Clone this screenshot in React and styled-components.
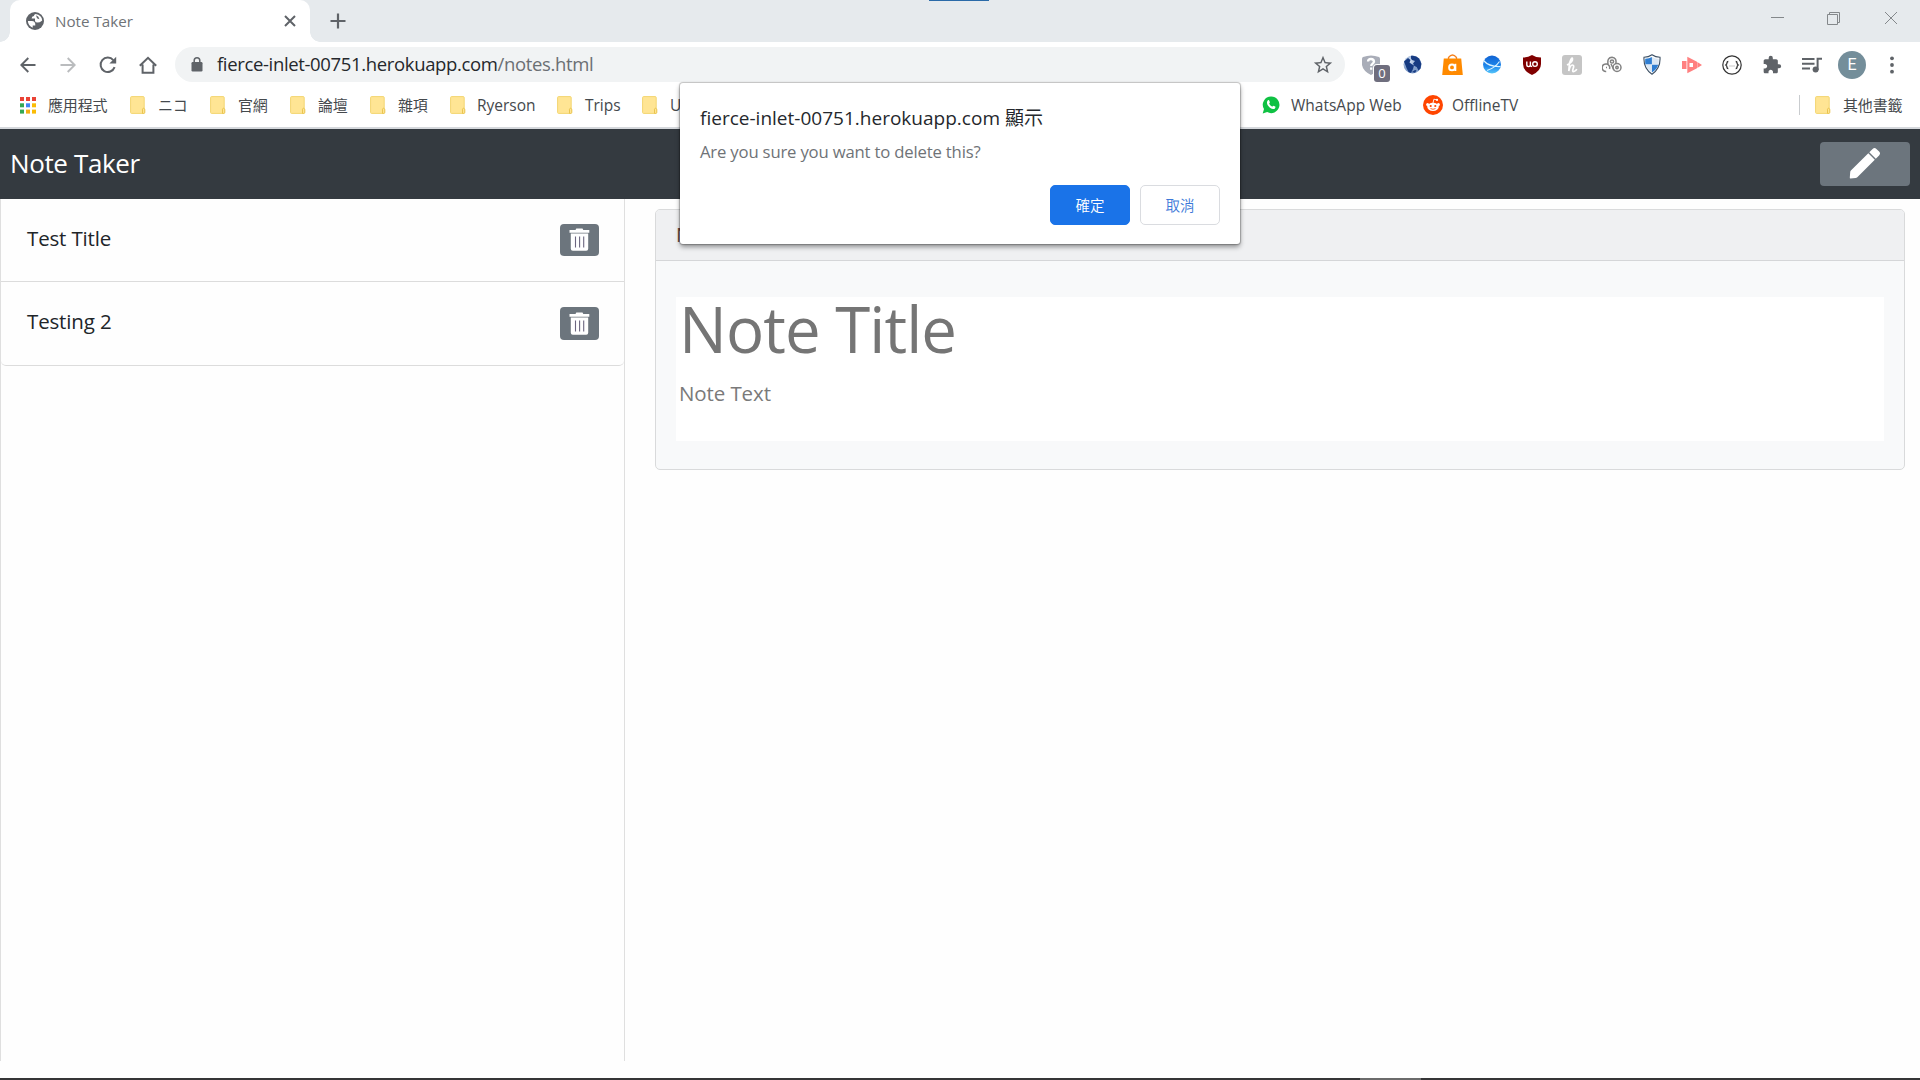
import React from "react";
import styled, { createGlobalStyle } from "styled-components";

const Global = createGlobalStyle`
  * { box-sizing: border-box; }
  html, body { margin: 0; padding: 0; height: 100%; background: #fff; overflow: hidden; }
  body { font-family: "Open Sans", "Noto Sans CJK TC", sans-serif; color: #212529; }
`;

const Screen = styled.div`
  width: 1920px; height: 1080px; display: flex; flex-direction: column;
  background: #fefefe; position: relative; overflow: hidden;
`;

const Label = styled.span`
  display: block; white-space: nowrap;
  font-size: ${(p) => p.$size}px; line-height: ${(p) => p.$line || Math.round(p.$size * 1.4)}px;
  letter-spacing: ${(p) => p.$track || 0}px; color: ${(p) => p.$color || "#212529"};
  font-weight: ${(p) => p.$weight || 400};
`;

/* ---------- tab strip ---------- */
const TabStrip = styled.header`
  height: 42px; flex: none; display: flex; background: #e6eaed; position: relative; padding-left: 10px;
`;
const Tab = styled.div`
  width: 300px; height: 42px; background: #fff; border-radius: 10px 10px 0 0; position: relative;
  display: flex; align-items: center; padding: 0 14px 0 16px;
  &::before, &::after {
    content: ""; position: absolute; bottom: 0; width: 10px; height: 10px;
  }
  &::before { left: -10px; background: radial-gradient(circle at 0 0, transparent 9.5px, #fff 10px); }
  &::after { right: -10px; background: radial-gradient(circle at 100% 0, transparent 9.5px, #fff 10px); }
`;
const TabTitle = styled(Label)`flex: 1; margin-left: 11px;`;
const NewTab = styled.div`
  width: 55px; height: 42px; display: flex; align-items: center; justify-content: center;
`;
const WindowControls = styled.div`
  margin-left: auto; display: flex; height: 36px; padding-right: 1px;
`;
const WindowButton = styled.div`
  width: 57px; display: flex; align-items: center; justify-content: center;
`;
const DragMark = styled.div`
  position: absolute; left: 929px; top: 0; width: 60px; height: 1px; background: #2a6aa8;
`;

/* ---------- toolbar ---------- */
const Toolbar = styled.div`
  height: 45px; flex: none; display: flex; align-items: center; background: #fff; padding-left: 8px;
`;
const IconSlot = styled.div`
  width: 40px; height: 40px; flex: none; display: flex; align-items: center; justify-content: center; position: relative;
  svg { display: block; }
`;
const Omnibox = styled.div`
  margin-left: 7px; width: 1170px; flex: none; height: 35px; border-radius: 18px; background: #f1f3f4;
  display: flex; align-items: center; padding: 0 11px 0 16px;
`;
const Url = styled(Label)`flex: 1; margin: 0 0 2px 14px; em { font-style: normal; color: #6b6f73; }`;
const Extensions = styled.div`display: flex; margin-left: 7px;`;
const Badge = styled.span`
  position: absolute; left: 22px; top: 20px; width: 16px; height: 17px; border-radius: 3px; background: #6f6e7e;
  color: #fff; font-size: 13px; line-height: 17px; text-align: center; box-shadow: 0 0 0 1px #fff;
`;
const Avatar = styled.div`
  width: 28px; height: 28px; border-radius: 50%; background: #748e9a; color: #fff;
  font: 16px/28px Roboto, sans-serif; text-align: center;
`;

/* ---------- bookmarks ---------- */
const Bookmarks = styled.nav`
  height: 40px; flex: none; display: flex; align-items: center; background: #fff; padding: 0 8px 4px 20px;
`;
const Bookmark = styled.div`
  width: ${(p) => p.$w}px; flex: none; display: flex; align-items: center; gap: ${(p) => p.$gap || 13}px;
`;
const Divider = styled.div`width: 1px; height: 20px; background: #c9cccf; margin: 0 15px 0 auto;`;
const Edge = styled.div`height: 2px; flex: none; background: #d5d8dc;`;

/* ---------- page ---------- */
const Navbar = styled.div`
  height: 70px; flex: none; background: #343a40; display: flex; align-items: center; justify-content: space-between;
  padding: 0 10px;
`;
const Brand = styled(Label)`margin-bottom: 2px;`;
const PencilButton = styled.button`
  width: 90px; height: 44px; border: 0; border-radius: 4px; background: #6c757d; padding: 0 0 2px;
  display: flex; align-items: center; justify-content: center;
`;
const Page = styled.main`flex: 1; display: flex; align-items: flex-start;`;
const Sidebar = styled.aside`
  width: 625px; height: 862px; border: solid #dfdfdf; border-width: 0 1px; flex: none;
`;
const ListItem = styled.div`
  height: ${(p) => p.$h}px; border-bottom: 1px solid #dcdcdc; display: flex; justify-content: space-between;
  padding: 25px 25px 0 26px; border-radius: ${(p) => (p.$last ? "0 0 5px 5px" : 0)};
`;
const TrashButton = styled.button`
  width: 39px; height: ${(p) => p.$h}px; border: 0; border-radius: 4px; background: #6c757d; padding: 0 0 1px;
  display: flex; align-items: center; justify-content: center;
`;
const Card = styled.section`
  margin: 10px 0 0 30px; width: 1250px; height: 261px; border: 1px solid #d9dadb; border-radius: 5px; background: #f8f9fa;
  overflow: hidden; display: flex; flex-direction: column;
`;
const CardHead = styled.div`
  height: 51px; flex: none; background: #eff0f2; border-bottom: 1px solid #d5d6d8; padding: 10px 20px;
`;
const NoteForm = styled.div`
  margin: 36px 20px 0; height: 144px; background: #fff; padding: 0 3px; display: flex; flex-direction: column;
`;
const NoteTitle = styled(Label)`margin: -10px 0 7px;`;

/* ---------- dialog ---------- */
const Dialog = styled.div`
  position: absolute; left: 680px; top: 83px; width: 560px; height: 161px; background: #fff; border-radius: 3px;
  box-shadow: 0 0 1px 1px rgba(0,0,0,.22), 0 3px 5px rgba(0,0,0,.4); padding: 20px 20px 19px;
  display: flex; flex-direction: column; gap: 7px;
`;
const DialogActions = styled.div`display: flex; justify-content: flex-end; gap: 10px; margin-top: auto;`;
const DialogButton = styled.button`
  width: 80px; height: 40px; border-radius: 5px; padding: 0 0 2px;
  background: ${(p) => (p.$primary ? "#1a73e8" : "#fff")}; color: ${(p) => (p.$primary ? "#fff" : "#3c78d8")};
  border: 1px solid ${(p) => (p.$primary ? "#1a73e8" : "#dadce0")};
  font: 350 14.5px "Noto Sans CJK TC", sans-serif;
`;

const Taskbar = styled.footer`
  height: 2px; flex: none; background: #353537; display: flex; padding-left: 1360px;
`;
const TaskMark = styled.div`width: 61px; background: #6b6b6b;`;

/* ---------- icons ---------- */
const G = "#5f6368";
const Globe = () => (
  <svg width="18" height="18" viewBox="0 0 18 18">
    <circle cx="9" cy="9" r="9" fill={G} />
    <path d="M9.600 2.100Q8 2.600 7.900 4.100 5.600 4.200 5.600 6.600H9v2.300q.2 1.500 2.600 1.600 2.300 0 3.600-1.300l1-.6Q15.900 3.200 9.600 2.100z" fill="#fff" />
    <path d="M1.900 9.100h3.900q3.900.2 3.500 4.300H6.700v2.300Q2 14 1.900 9.100z" fill="#fff" />
    <path d="M10 3.200Q13 4.200 13.400 7.200L11 6.200z" fill={G} />
  </svg>
);
const Cross = ({ size, color, width }) => (
  <svg width={size} height={size} viewBox={`0 0 ${size} ${size}`}>
    <path d={`M1 1L${size - 1} ${size - 1}M${size - 1} 1L1 ${size - 1}`} stroke={color} strokeWidth={width} />
  </svg>
);
const Arrow = ({ flip, color }) => (
  <svg width="16" height="16" viewBox="0 0 16 16" transform={flip ? "scale(-1 1)" : undefined}>
    <path d="M15.500 8H1.500M8.300 1L1.300 8l7 7" fill="none" stroke={color} strokeWidth="1.900" />
  </svg>
);
const Reload = () => (
  <svg width="18" height="18" viewBox="0 0 18 18">
    <path d="M15.600 11.200A7.200 7.200 0 1 1 14.300 4.100" fill="none" stroke={G} strokeWidth="2" />
    <path d="M17.200.8V7.600H10.400z" fill={G} />
  </svg>
);
const Home = () => (
  <svg width="18" height="18" viewBox="0 0 18 18">
    <path d="M.8 9.800L9 1.800l8.200 8M3.600 8.500v8.300h10.800V8.500" fill="none" stroke={G} strokeWidth="2" />
  </svg>
);
const Lock = () => (
  <svg width="12" height="15" viewBox="0 0 12 15">
    <rect x=".5" y="5" width="11" height="9.500" rx="1.200" fill={G} />
    <path d="M3.200 6V3.600a2.800 2.800 0 0 1 5.600 0V6" fill="none" stroke={G} strokeWidth="1.500" />
  </svg>
);
const Star = () => (
  <svg width="22" height="22" viewBox="0 0 24 24">
    <path fill={G} d="M22 9.240l-7.190-.62L12 2 9.190 8.630 2 9.240l5.460 4.730L5.820 21 12 17.270 18.180 21l-1.630-7.030L22 9.240zM12 15.400l-3.760 2.270 1-4.280-3.320-2.880 4.380-.38L12 6.100l1.710 4.040 4.380.38-3.320 2.880 1 4.280L12 15.400z" />
  </svg>
);
const Apps = () => (
  <svg width="16" height="17" viewBox="0 0 16 17">
    {["#ea4335", "#ea4335", "#ea4335", "#34a853", "#4285f4", "#fbbc05", "#34a853", "#f4ae13", "#fbbc05"].map((c, i) => (
      <rect key={i} x={(i % 3) * 6} y={Math.floor(i / 3) * 6.300} width="4" height="4" fill={c} />
    ))}
  </svg>
);
const Folder = () => (
  <svg width="16" height="18" viewBox="0 0 16 18">
    <rect x=".6" y=".6" width="13.600" height="16.800" rx="1" fill="#ffe594" stroke="#f3d671" />
    <path d="M12.500 17.400v-4.200q1-2.400 2.300 0v3.200q0 1-1 1z" fill="#ffe594" stroke="#e9c44f" />
  </svg>
);
const Whatsapp = () => (
  <svg width="18" height="18" viewBox="0 0 18 18">
    <path d="M9.200.5a8.300 8.300 0 1 1-4 15.600L.7 17.400 2 13.100A8.300 8.300 0 0 1 9.200.5z" fill="#0fc143" />
    <path d="M5.700 4.500c.8-.8 1.300-.5 1.600.3l.6 1.400c.2.500-.7 1.200-.7 1.400.5 1.400 1.600 2.500 3 3 .4 0 .9-1.100 1.300-.9l1.700.8c.6.3.2 1.700-.5 2.200-1.300.9-3.300.3-5.300-1.400C5.100 9.200 4.200 6.300 5.700 4.500z" fill="#fff" />
  </svg>
);
const Reddit = () => (
  <svg width="20" height="20" viewBox="0 0 20 20">
    <circle cx="10" cy="10" r="10" fill="#ff4500" />
    <path d="M10 8l.9-3.800 2.700.6" fill="none" stroke="#fff" strokeWidth=".9" />
    <circle cx="14" cy="4.900" r="1.100" fill="#fff" />
    <circle cx="4.600" cy="9.600" r="1.500" fill="#fff" /><circle cx="15.400" cy="9.600" r="1.500" fill="#fff" />
    <ellipse cx="10" cy="11.800" rx="5.800" ry="4.100" fill="#fff" />
    <circle cx="7.700" cy="11" r="1.100" fill="#ff4500" /><circle cx="12.300" cy="11" r="1.100" fill="#ff4500" />
    <path d="M7.500 13.500q2.500 1.600 5 0" fill="none" stroke="#ff4500" strokeWidth=".8" />
  </svg>
);
const QuestionShield = () => (
  <svg width="20" height="20" viewBox="0 0 20 20">
    <path d="M1 2Q9-1 17 2q1 .3 1 2v6q-1 6-9 10Q1 16 0 10V4Q0 2.300 1 2z" fill="#a9adb8" />
    <path d="M6 6.500Q6.200 4 9 4t3 2.600c0 2-2.800 2-2.800 4.400M9.200 12.600v2.200" fill="none" stroke="#fff" strokeWidth="2.300" />
  </svg>
);
const EarthGlobe = () => (
  <svg width="19" height="19" viewBox="0 0 19 19">
    <defs><radialGradient id="earth" cx=".35" cy=".3"><stop offset="0" stopColor="#d3e0f2" /><stop offset="1" stopColor="#7f9cc8" /></radialGradient></defs>
    <circle cx="9.500" cy="9.500" r="9" fill="url(#earth)" />
    <path d="M8 .8q5-.8 8 2.700l2.300 5-.8 5-2 2-1.800-3.500-2.300-1-1.400-2.500L12 6 9 5 8 3.500zM1 6.500l4-3.500 2.500 2-1 2.500 2 1.500 2.500 1.500-1 3.500-2 4-2.500-1-2-4zM9 17l3-2 1.500.5-1.500 2.300z" fill="#173b82" />
  </svg>
);
const Bag = () => (
  <svg width="21" height="22" viewBox="0 0 21 22">
    <path d="M6.500 6V3.500q4-5 8 0V6" fill="none" stroke="#f58220" strokeWidth="1.300" />
    <path d="M1.800 4.500h17.400L20.800 21H.2z" fill="#ff8a00" />
    <circle cx="10" cy="13.400" r="2.900" fill="none" stroke="#fff" strokeWidth="1.900" />
    <path d="M13.400 9.800v7.200" stroke="#fff" strokeWidth="1.800" />
  </svg>
);
const BlueGlobe = () => (
  <svg width="20" height="19" viewBox="0 0 20 19">
    <defs><linearGradient id="ocean" x2="0" y2="1"><stop offset="0" stopColor="#1263d2" /><stop offset=".6" stopColor="#1d87ec" /><stop offset="1" stopColor="#58c6fa" /></linearGradient></defs>
    <circle cx="10" cy="9.500" r="9" fill="url(#ocean)" />
    <path d="M1.500 5.500Q7 12 18.500 11.500M17.500 6.500Q13 13 5 15.500" fill="none" stroke="#d9f2ff" strokeWidth="1.200" />
  </svg>
);
const Ublock = () => (
  <svg width="18" height="20" viewBox="0 0 18 20">
    <path d="M9 0q4 2.500 9 2.500V9q0 7-9 11Q0 16 0 9V2.500Q5 2.500 9 0z" fill="#800000" />
    <path d="M3.800 6.500v3.300q0 1.800 1.800 1.800t1.800-1.800V6.500v3.600q.3 1.500 1.700 1.500" fill="none" stroke="#fff" strokeWidth="1.400" />
    <circle cx="12" cy="9.100" r="2.300" fill="none" stroke="#fff" strokeWidth="1.400" />
  </svg>
);
const Honey = () => (
  <svg width="20" height="20" viewBox="0 0 20 20">
    <rect width="20" height="20" rx="3" fill="#c5c5c5" />
    <path d="M5 10Q11 7 10.500 4T7.500 8L6.800 16q1.500-6 3.600-6t.8 3.500.8 3 2.700-2.500" fill="none" stroke="#fff" strokeWidth="1.700" />
  </svg>
);
const Rings = () => (
  <svg width="20" height="17" viewBox="0 0 20 17">
    <g fill="none" stroke="#828282" strokeWidth="1.500">
      <path d="M4.200 15.500A3.800 3.800 0 1 1 7.500 13M6 8Q5 1.500 10 1.300q5 .4 3.800 6.400" />
      <circle cx="15" cy="11.500" r="4" /><circle cx="10" cy="5.500" r="1.600" /><circle cx="15" cy="11.500" r="1.200" />
      <path d="M4 11.500h1M9 8l3 6" />
    </g>
  </svg>
);
const CheckedShield = () => (
  <svg width="18" height="21" viewBox="0 0 18 21">
    <path d="M9 .8q3.500 2.400 8 2.400 .8 11-8 17Q.2 14.200 1 3.200 5.500 3.200 9 .8z" fill="#fff" stroke="#3c4f63" strokeWidth="1.100" />
    <path d="M8.900 3v7.600H2.400Q2 8 2.200 4.700 6 4.800 8.900 3zM9 10.600h6.300Q14 15.500 9 18.600z" fill="#2e7dd1" />
    <path d="M9 3q3 1.800 6.800 1.700.2 3-.4 5.900H9zM2.600 10.600H9v8Q4 15.500 2.600 10.600z" fill="#dbe7f3" />
  </svg>
);
const PinkPlay = () => (
  <svg width="20" height="18" viewBox="0 0 20 18">
    <path d="M0 5h4.500v8H0zM5.300.8L15 5.800v6.400L5.300 17.200zM15.300 6L20 9l-4.700 3z" fill="#ff8080" />
    <path d="M7.500 7H11v4H7.500z" fill="#fff" />
  </svg>
);
const Braces = () => (
  <svg width="20" height="20" viewBox="0 0 20 20">
    <circle cx="10" cy="10" r="9.200" fill="none" stroke="#333" strokeWidth="1.200" />
    <path d="M6.300 6.500q-1.300 0-1.300 1.300t-1.200 2.200q1.200.8 1.200 2.200t1.300 1.300M13.700 6.500q1.300 0 1.300 1.300t1.200 2.200q-1.200.8-1.200 2.200t-1.300 1.300" fill="none" stroke="#333" strokeWidth="1.300" />
    <path d="M7.500 11h1M9.500 11h1M11.500 11h1" stroke="#777" strokeWidth=".8" />
  </svg>
);
const Puzzle = () => (
  <svg width="20" height="20" viewBox="0 0 24 24">
    <path fill={G} d="M20.500 11H19V7c0-1.100-.9-2-2-2h-4V3.500a2.500 2.500 0 0 0-5 0V5H4c-1.100 0-1.990.9-1.990 2v3.800H3.500c1.490 0 2.700 1.210 2.700 2.700s-1.210 2.700-2.700 2.700H2V20c0 1.100.9 2 2 2h3.800v-1.500c0-1.490 1.210-2.700 2.700-2.700 1.490 0 2.700 1.210 2.700 2.700V22H17c1.100 0 2-.9 2-2v-4h1.500a2.500 2.500 0 0 0 0-5z" />
  </svg>
);
const Music = () => (
  <svg width="20" height="16" viewBox="0 0 20 16">
    <path d="M0 2h12.500M0 6.800h12.500M0 11.600h8M15.600 13V1.800H20" fill="none" stroke={G} strokeWidth="2" />
    <circle cx="13.600" cy="12.600" r="3" fill={G} />
  </svg>
);
const Dots = () => (
  <svg width="4" height="18" viewBox="0 0 4 18">
    {[2.300, 9, 15.700].map((y) => <circle key={y} cx="2" cy={y} r="1.900" fill={G} />)}
  </svg>
);
const Trash = () => (
  <svg width="21" height="23" viewBox="0 0 21 23">
    <path d="M.5 2h6l.8-1.500h6.200l.8 1.500h6v2.700H.5zM1.800 5.600h17.400v15.200q0 2-2 2H3.800q-2 0-2-2z" fill="#fff" />
    <path d="M6.500 8.500v11M10.600 8.500v11M14.700 8.500v11" stroke="#6c6680" strokeWidth="1.100" />
  </svg>
);
const Pencil = () => (
  <svg width="32" height="32" viewBox="0 0 32 32">
    <path d="M19.300 6.200L25.800 12.700 8.300 30.200Q7.600 31 6.600 31L1.500 31.500Q.6 31.500.8 30.600L1.200 25.200Q1.200 24.300 1.900 23.600zM20.300 5.200L23.600 1.900Q25.500 0 27.400 1.900L30.100 4.600Q32 6.500 30.100 8.400L26.800 11.700z" fill="#fff" />
  </svg>
);

const extensionIcons = [EarthGlobe, Bag, BlueGlobe, Ublock, Honey, Rings, CheckedShield, PinkPlay, Braces, Puzzle, Music];

const bookmarks = [
  { icon: Apps, text: "應用程式", w: 110, gap: 12 },
  { icon: Folder, text: "ニコ", w: 80, gap: 12 },
  { icon: Folder, text: "官網", w: 80, gap: 12 },
  { icon: Folder, text: "論壇", w: 80, gap: 12 },
  { icon: Folder, text: "雜項", w: 80, gap: 12 },
  { icon: Folder, text: "Ryerson", w: 107, gap: 11, latin: true },
  { icon: Folder, text: "Trips", w: 85, gap: 12, latin: true },
  { icon: Folder, text: "U", w: 620, gap: 12, latin: true },
  { icon: Whatsapp, text: "WhatsApp Web", w: 161, gap: 11, latin: true },
  { icon: Reddit, text: "OfflineTV", w: 110, gap: 9, latin: true },
];
const notes = [
  { title: "Test Title", h: 83, button: 32 },
  { title: "Testing 2", h: 84, button: 33 },
];

const BookmarkItem = ({ icon: Icon, text, w, gap, latin }) => (
  <Bookmark $w={w} $gap={gap}>
    <Icon />
    <Label $size={latin ? 15.500 : 15} $track={latin ? 0 : -0.150} $color="#45494d" $line={22}>{text}</Label>
  </Bookmark>
);

export default function App() {
  return (
    <Screen>
      <Global />
      <TabStrip>
        <Tab>
          <Globe />
          <TabTitle $size={15.200} $color="#6f7377" $line={22}>Note Taker</TabTitle>
          <Cross size={12} color={G} width={2} />
        </Tab>
        <NewTab>
          <svg width="16" height="16" viewBox="0 0 16 16"><path d="M8 .5v15M.5 8h15" stroke={G} strokeWidth="2.200" /></svg>
        </NewTab>
        <WindowControls>
          <WindowButton><svg width="15" height="13"><path d="M2 5.500h13" stroke="#84888b" /></svg></WindowButton>
          <WindowButton>
            <svg width="13" height="13"><path d="M.5 2.500h10v10H.5zM2.500 2.500v-2h10v10h-2" fill="none" stroke="#84888b" /></svg>
          </WindowButton>
          <WindowButton><Cross size={14} color="#84888b" width={1} /></WindowButton>
        </WindowControls>
        <DragMark />
      </TabStrip>

      <Toolbar>
        <IconSlot><Arrow color={G} /></IconSlot>
        <IconSlot><Arrow color="#babcbe" flip /></IconSlot>
        <IconSlot><Reload /></IconSlot>
        <IconSlot><Home /></IconSlot>
        <Omnibox>
          <Lock />
          <Url $size={18.500} $track={-0.350} $line={26} $color="#25282c">fierce-inlet-00751.herokuapp.com<em>/notes.html</em></Url>
          <Star />
        </Omnibox>
        <Extensions>
          <IconSlot><QuestionShield /><Badge>0</Badge></IconSlot>
          {extensionIcons.map((Icon, i) => <IconSlot key={i}><Icon /></IconSlot>)}
          <IconSlot><Avatar>E</Avatar></IconSlot>
          <IconSlot><Dots /></IconSlot>
        </Extensions>
      </Toolbar>

      <Bookmarks>
        {bookmarks.map((b) => <BookmarkItem key={b.text} {...b} />)}
        <Divider />
        <BookmarkItem icon={Folder} text="其他書籤" w={97} gap={12} />
      </Bookmarks>
      <Edge />

      <Navbar>
        <Brand $size={26} $track={-0.370} $color="#fff" $line={36}>Note Taker</Brand>
        <PencilButton><Pencil /></PencilButton>
      </Navbar>

      <Page>
        <Sidebar>
          {notes.map((n, i) => (
            <ListItem key={n.title} $h={n.h} $last={i === notes.length - 1}>
              <Label $size={20.500} $track={-0.150} $line={28}>{n.title}</Label>
              <TrashButton $h={n.button}><Trash /></TrashButton>
            </ListItem>
          ))}
        </Sidebar>
        <Card>
          <CardHead><Label $size={20} $line={30} $weight={500} $color="#6b4a3e">New Note</Label></CardHead>
          <NoteForm>
            <NoteTitle $size={63.500} $track={-0.900} $line={84} $color="#757575">Note Title</NoteTitle>
            <Label $size={20.500} $track={-0.100} $line={30} $color="#7a7a7a">Note Text</Label>
          </NoteForm>
        </Card>
      </Page>

      <Taskbar><TaskMark /></Taskbar>

      <Dialog>
        <Label $size={19} $track={0.010} $line={30} $color="#25282c">fierce-inlet-00751.herokuapp.com 顯示</Label>
        <Label $size={16.700} $track={-0.180} $line={24} $color="#6f7377">Are you sure you want to delete this?</Label>
        <DialogActions>
          <DialogButton $primary>確定</DialogButton>
          <DialogButton>取消</DialogButton>
        </DialogActions>
      </Dialog>
    </Screen>
  );
}
